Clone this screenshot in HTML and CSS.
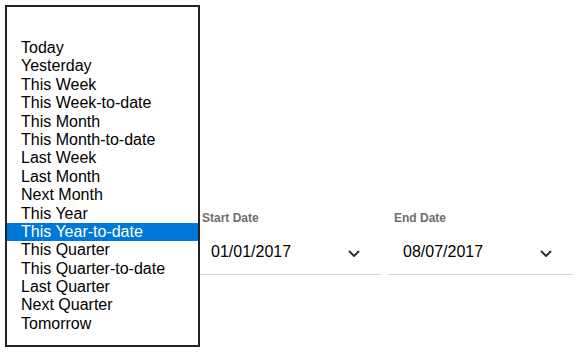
FILE: index.html
```html
<!DOCTYPE html>
<html lang="en">
<head>
    <meta charset="UTF-8">
    <meta name="viewport" content="width=device-width, initial-scale=1.0">
    <title>Date Range</title>
    <link rel="stylesheet" href="styles.css">
</head>
<body>
    <div class="page">
        <div class="filters">
            <div class="range"></div>

            <div class="field">
                <label class="field-label">Start Date</label>
                <div class="field-control">
                    <span>01/01/2017</span>
                    <svg class="chevron" width="12" height="7" viewBox="0 0 12 7">
                        <path d="M1 1 L6 6 L11 1" fill="none" stroke="#333" stroke-width="2"/>
                    </svg>
                </div>
            </div>

            <div class="field">
                <label class="field-label">End Date</label>
                <div class="field-control">
                    <span>08/07/2017</span>
                    <svg class="chevron" width="12" height="7" viewBox="0 0 12 7">
                        <path d="M1 1 L6 6 L11 1" fill="none" stroke="#333" stroke-width="2"/>
                    </svg>
                </div>
            </div>
        </div>

        <!-- lista abierta del selector de rango -->
        <ul class="listbox">
            <li>Today</li>
            <li>Yesterday</li>
            <li>This Week</li>
            <li>This Week-to-date</li>
            <li>This Month</li>
            <li>This Month-to-date</li>
            <li>Last Week</li>
            <li>Last Month</li>
            <li>Next Month</li>
            <li>This Year</li>
            <li class="selected">This Year-to-date</li>
            <li>This Quarter</li>
            <li>This Quarter-to-date</li>
            <li>Last Quarter</li>
            <li>Next Quarter</li>
            <li>Tomorrow</li>
        </ul>
    </div>
</body>
</html>
```

FILE: styles.css
```css
body {
    margin: 0;
    padding: 0;
    font-family: "Liberation Sans", Arial, sans-serif;
    background-color: #fff;
    color: #000;
}

.page {
    position: relative;
    width: 578px;
    height: 353px;
}

.filters {
    display: flex;
    gap: 7px;
    padding-top: 211px;
}

.range {
    width: 189px;
}

.field {
    width: 185px;
}

.field-label {
    display: block;
    padding-left: 6px;
    font-size: 12px;
    font-weight: bold;
    color: #6e6e6e;
}

.field-control {
    display: flex;
    justify-content: space-between;
    align-items: center;
    padding: 18px 0 13px 15px;
    font-size: 16px;
    line-height: 18px;
    border-bottom: 1px solid #d4d4d4;
}

.chevron {
    margin-right: 21px;
    margin-top: 2px;
}

.listbox {
    position: absolute;
    left: 5px;
    top: 5px;
    width: 191px;
    height: 306px;
    margin: 0;
    padding: 32px 0 0 0;
    box-sizing: content-box;
    list-style: none;
    background-color: #fff;
    border: 2px solid #222;
    font-size: 16px;
    line-height: 18.4px;
}

.listbox li {
    padding-left: 14px;
    height: 18.4px;
}

.listbox .selected {
    background-color: #0078d7;
    color: #fff;
}
```
